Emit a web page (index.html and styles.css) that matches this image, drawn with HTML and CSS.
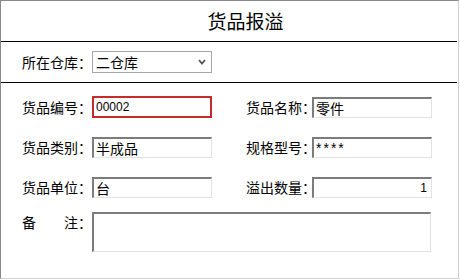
FILE: index.html
```html
<!doctype html>
<html lang="zh-cn">
    <head>
        <meta charset="utf-8">
        <title>货品报溢</title>
        <link rel="stylesheet" href="styles.css">
    </head>
    <body>
        <div class="panel">
            <div class="panel-title">货品报溢</div>
            <div class="panel-row">
                <label class="lbl">所在仓库：</label>
                <span class="sel-wrap">
                    <select class="sel"><option>二仓库</option><option>一仓库</option></select>
                    <svg class="chev" width="8" height="6" viewBox="0 0 8 6"><polyline points="1,1 4,4.5 7,1" fill="none" stroke="#555" stroke-width="1.8"/></svg>
                </span>
            </div>
            <div class="fields">
                <label class="lbl">货品编号：</label>
                <input class="txt txt-err num" value="00002">
                <span></span>
                <label class="lbl">货品名称：</label>
                <input class="txt" value="零件">

                <label class="lbl">货品类别：</label>
                <input class="txt" value="半成品">
                <span></span>
                <label class="lbl">规格型号：</label>
                <input class="txt stars" value="****">

                <label class="lbl">货品单位：</label>
                <input class="txt" value="台">
                <span></span>
                <label class="lbl">溢出数量：</label>
                <input class="txt num right" value="1">

                <label class="lbl lbl-top">备&#12288;&#12288;注：</label>
                <textarea class="memo"></textarea>
            </div>
        </div>
    </body>
</html>
```

FILE: styles.css
```css
body{margin:0;background:#fff;font:14px/21px "Noto Sans CJK SC","Liberation Sans",sans-serif;color:#000;}
.panel{width:459px;height:279px;box-sizing:border-box;border:1px solid #888;border-right-color:#d0d0d0;border-bottom-color:#d0d0d0;}
.panel-title{height:40px;line-height:40px;border-bottom:1px solid #000;margin-right:1px;text-align:center;padding-left:33px;font-size:19px;}
.panel-row{height:40px;display:flex;align-items:center;border-bottom:1px solid #000;margin-right:1px;padding-left:21px;}
.panel-row .lbl{width:70px;}

.lbl{white-space:nowrap;font-size:14px;line-height:21px;}
.lbl-top{align-self:start;line-height:16px;padding-top:2px;}

.sel-wrap{position:relative;display:inline-block;}
.sel{appearance:none;-webkit-appearance:none;width:120px;height:22px;box-sizing:border-box;border:1px solid #a6a6a6;border-radius:0;background:#fff;padding:0 0 0 3px;font:14px "Noto Sans CJK SC",sans-serif;color:#000;display:block;}
.chev{position:absolute;right:6px;top:8px;pointer-events:none;}

.fields{display:grid;grid-template-columns:70px 120px 34px 66px 120px;grid-template-rows:21px 21px 21px 40px;row-gap:19px;padding:14px 0 0 21px;}
.fields > *:nth-last-child(-n+2){margin-top:-5px;}

.txt{box-sizing:border-box;height:21px;width:120px;margin:0;padding:0 2px;border-style:solid;border-width:2px 1px 1px 2px;border-color:#7c7c7c #e2e2e2 #e2e2e2 #7c7c7c;background:#fff;font:14px "Liberation Sans","Noto Sans CJK SC",sans-serif;color:#000;outline:none;}
.num{font-size:12px;}
.right{text-align:right;padding-right:4px;}
.stars{letter-spacing:2px;}
.txt-err{border:2px solid #c42b2b;height:22px;margin-top:-1px;}

.memo{grid-column:2 / 6;box-sizing:border-box;width:339px;height:40px;margin:0;padding:2px;resize:none;border-style:solid;border-width:2px 1px 1px 2px;border-color:#7c7c7c #e2e2e2 #e2e2e2 #7c7c7c;font:14px "Noto Sans CJK SC",sans-serif;outline:none;}
```
